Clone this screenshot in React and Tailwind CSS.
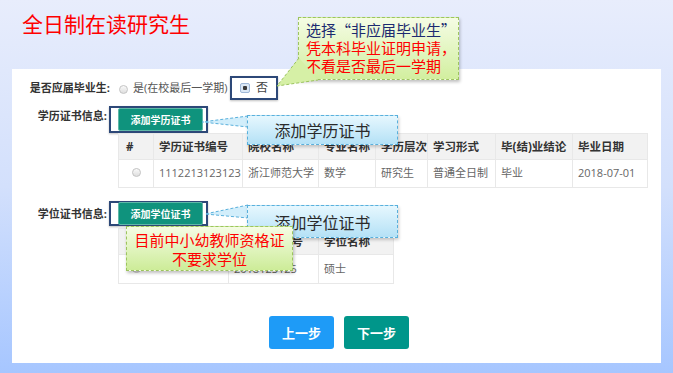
import React from "react";

const Radio = () => (
  <span className="inline-block w-[9px] h-[9px] rounded-full border border-[#c4c4c4] bg-gradient-to-b from-[#fafafa] to-[#dedede] shrink-0" />
);

const RadioChecked = () => (
  <span className="flex items-center justify-center w-[10px] h-[10px] rounded-[2px] border border-[#9fb8d8] bg-[#dbe8f6] shrink-0">
    <span className="block w-[4px] h-[4px] rounded-[1px] bg-[#3a3a3a]" />
  </span>
);

const GreenBtn = ({ children }) => (
  <div className="flex items-center justify-center w-[85px] h-[23px] rounded-[2px] bg-[#0f937d] border border-[#5fb8a8] text-white text-[10px] font-bold leading-none">
    {children}
  </div>
);

export default function App() {
  const th = "border border-[#e8e8e8] text-left font-bold text-[11.5px] text-[#333] pl-[5px] whitespace-nowrap overflow-hidden";
  const td = "border border-[#e8e8e8] text-left text-[11px] text-[#666] pl-[5px] whitespace-nowrap overflow-hidden";
  return (
    <div className="relative w-[673px] h-[373px] overflow-hidden bg-gradient-to-b from-[#e8edfc] via-[#d3e0fc] to-[#a6c6ff] font-['Open_Sans','Noto_Sans_CJK_SC',sans-serif]">
      {/* Title */}
      <div className="h-[69px] pt-[9px] pl-[22px] text-[21px] leading-[28px] text-[#ff0000] font-['Noto_Sans_CJK_SC',sans-serif]">
        全日制在读研究生
      </div>

      {/* Panel */}
      <div className="ml-[12px] w-[649px] h-[294px] bg-white flex flex-col">
        {/* Row 1 */}
        <div className="mt-[7px] h-[24px] flex items-center">
          <div className="w-[98px] text-right text-[11px] font-bold text-[#333] leading-[14px]">是否应届毕业生:</div>
          <span className="ml-[9px]"><Radio /></span>
          <span className="ml-[5px] w-[97px] text-[11px] text-[#555] whitespace-nowrap">是(在校最后一学期)</span>
          <div className="h-[24px] w-[48px] border-2 border-[#2d4878] flex items-center pl-[8px] shadow-[0_1px_2px_rgba(0,0,0,0.25)]">
            <RadioChecked />
            <span className="ml-[6px] text-[12px] text-[#444] leading-none">否</span>
          </div>
        </div>

        {/* Row 2 */}
        <div className="mt-[6px] flex items-start">
          <div className="w-[97px] pr-[2px] pt-[3px] text-right text-[11px] font-bold text-[#333] leading-[14px]">学历证书信息:</div>
          <div className="flex flex-col">
            <div className="h-[27px] w-[99px] border-2 border-[#2d4878] flex items-center pl-[7px] shadow-[0_1px_2px_rgba(0,0,0,0.25)]">
              <GreenBtn>添加学历证书</GreenBtn>
            </div>
            <table className="ml-[9px] w-[529px] table-fixed border-collapse">
              <colgroup>
                <col className="w-[35px]" />
                <col className="w-[89px]" />
                <col className="w-[76px]" />
                <col className="w-[57px]" />
                <col className="w-[52px]" />
                <col className="w-[68px]" />
                <col className="w-[77px]" />
                <col className="w-[75px]" />
              </colgroup>
              <thead>
                <tr className="h-[26px] bg-[#f2f2f2]">
                  <th className={th + " pl-[7px]"}>#</th>
                  <th className={th}>学历证书编号</th>
                  <th className={th}>院校名称</th>
                  <th className={th}>专业名称</th>
                  <th className={th}>学历层次</th>
                  <th className={th}>学习形式</th>
                  <th className={th}>毕(结)业结论</th>
                  <th className={th}>毕业日期</th>
                </tr>
              </thead>
              <tbody>
                <tr className="h-[28px]">
                  <td className={td + " pl-[13px]"}><Radio /></td>
                  <td className={td + " text-[10.5px] pl-[4px]"}>1112213123123</td>
                  <td className={td}>浙江师范大学</td>
                  <td className={td}>数学</td>
                  <td className={td}>研究生</td>
                  <td className={td}>普通全日制</td>
                  <td className={td}>毕业</td>
                  <td className={td}>2018-07-01</td>
                </tr>
              </tbody>
            </table>
          </div>
        </div>

        {/* Row 3 */}
        <div className="mt-[13px] flex items-start">
          <div className="w-[97px] pr-[2px] pt-[6px] text-right text-[11px] font-bold text-[#333] leading-[14px]">学位证书信息:</div>
          <div className="flex flex-col">
            <div className="h-[25px] w-[99px] border-2 border-[#2d4878] flex items-center pl-[7px] shadow-[0_1px_2px_rgba(0,0,0,0.25)]">
              <GreenBtn>添加学位证书</GreenBtn>
            </div>
            <table className="mt-[2px] ml-[9px] w-[275px] table-fixed border-collapse">
              <colgroup>
                <col className="w-[110px]" />
                <col className="w-[90px]" />
                <col className="w-[75px]" />
              </colgroup>
              <thead>
                <tr className="h-[26px] bg-[#f2f2f2]">
                  <th className={th + " pl-[7px]"}>#</th>
                  <th className={th}>学位证书编号</th>
                  <th className={th}>学位名称</th>
                </tr>
              </thead>
              <tbody>
                <tr className="h-[29px]">
                  <td className={td + " pl-[13px]"}><Radio /></td>
                  <td className={td + " text-[10.5px]"}>2018123125</td>
                  <td className={td}>硕士</td>
                </tr>
              </tbody>
            </table>
          </div>
        </div>

        {/* Buttons */}
        <div className="mt-[32px] flex justify-center gap-[10px] pl-[5px]">
          <button className="w-[65px] h-[33px] rounded-[3px] bg-[#1e9bf7] text-white text-[13px] font-bold font-['Noto_Sans_CJK_SC',sans-serif]">上一步</button>
          <button className="w-[65px] h-[33px] rounded-[3px] bg-[#00968a] text-white text-[13px] font-bold font-['Noto_Sans_CJK_SC',sans-serif]">下一步</button>
        </div>
      </div>

      {/* Top green callout */}
      <div className="absolute left-[298px] top-[17px] w-[161px] h-[63px] border border-dashed border-[#9cc45e] bg-gradient-to-b from-[#f5fce4] to-[#d2ef9f] shadow-[1px_2px_3px_rgba(0,0,0,0.25)] pl-[7px] pt-[3px] text-[15px] leading-[18px] font-['Noto_Sans_CJK_SC',sans-serif] whitespace-nowrap">
        <div className="text-[#1c2a70]">选择“非应届毕业生”</div>
        <div className="text-[#ff0000]">凭本科毕业证明申请，</div>
        <div className="text-[#ff0000]">不看是否最后一学期</div>
      </div>
      <svg className="absolute left-0 top-0" width="673" height="373" viewBox="0 0 673 373">
        <polygon points="299,58 277,86 318,80" fill="#d6f0a6" />
        <polyline points="299,58 277,86 318,80" fill="none" stroke="#9cc45e" strokeWidth="1" strokeDasharray="3,2" />
      </svg>

      {/* Blue callout tails */}
      <svg className="absolute left-0 top-0" width="673" height="373" viewBox="0 0 673 373">
        <polygon points="248,116 202,122 248,127" fill="#d2eefb" />
        <polyline points="248,116 202,122 248,127" fill="none" stroke="#59b0dc" strokeWidth="1" strokeDasharray="3,2" />
        <polygon points="248,205 205,214 248,218" fill="#d2eefb" />
        <polyline points="248,205 205,214 248,218" fill="none" stroke="#59b0dc" strokeWidth="1" strokeDasharray="3,2" />
      </svg>
      <div className="absolute left-[247px] top-[115px] w-[151px] h-[30px] border border-dashed border-[#59b0dc] bg-gradient-to-b from-[#e6f7fe] to-[#b4e1f6] shadow-[1px_2px_3px_rgba(0,0,0,0.2)] flex items-center justify-center text-[16px] text-[#2a2a2a] font-['Noto_Sans_CJK_SC',sans-serif]">
        添加学历证书
      </div>
      <div className="absolute left-[247px] top-[205px] w-[151px] h-[33px] border border-dashed border-[#59b0dc] bg-gradient-to-b from-[#e6f7fe] to-[#b4e1f6] shadow-[1px_2px_3px_rgba(0,0,0,0.2)] flex items-center justify-center text-[16px] text-[#2a2a2a] font-['Noto_Sans_CJK_SC',sans-serif]">
        添加学位证书
      </div>

      {/* Red text green callout */}
      <div className="absolute left-[126px] top-[226px] w-[167px] h-[45px] border border-dashed border-[#9cc45e] bg-gradient-to-b from-[#f5fce4] to-[#cdec98] shadow-[1px_2px_3px_rgba(0,0,0,0.25)] flex flex-col items-center justify-center text-[15px] leading-[19px] text-[#ff0000] font-['Noto_Sans_CJK_SC',sans-serif] whitespace-nowrap">
        <div>目前中小幼教师资格证</div>
        <div>不要求学位</div>
      </div>
    </div>
  );
}
